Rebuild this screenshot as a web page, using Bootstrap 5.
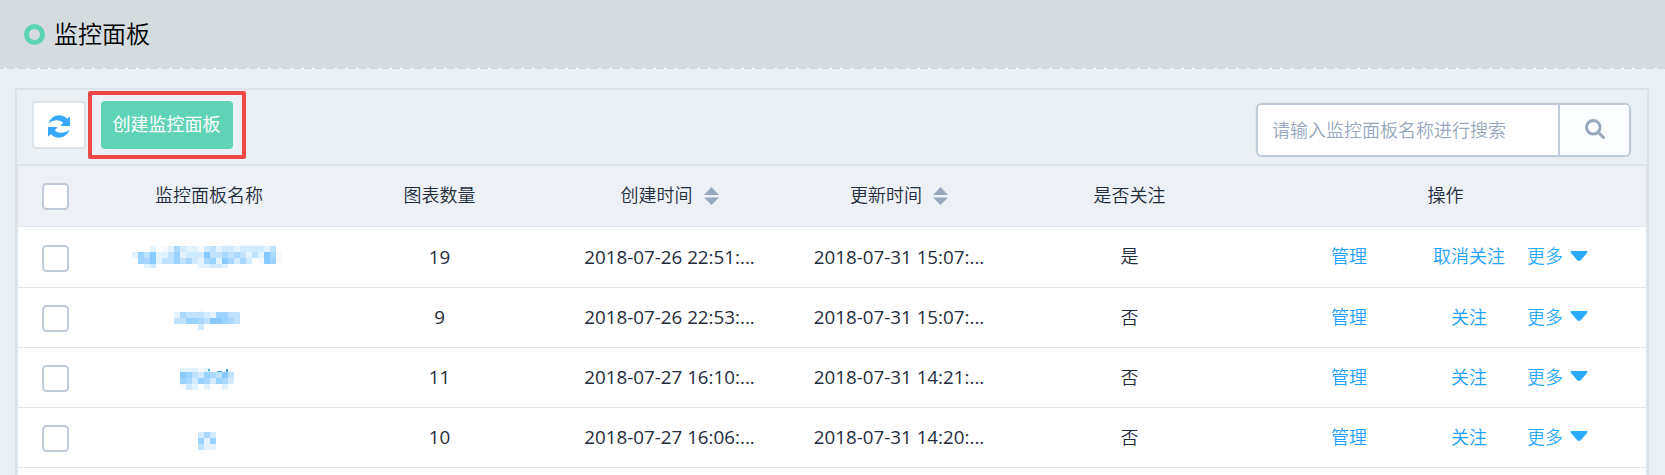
<!DOCTYPE html>
<html lang="zh-CN">
<head>
<meta charset="utf-8">
<meta name="viewport" content="width=device-width, initial-scale=1">
<title>监控面板</title>
<link href="https://cdn.jsdelivr.net/npm/bootstrap@5.3.0/dist/css/bootstrap.min.css" rel="stylesheet">
<style>
html,body{height:475px;overflow:hidden}
body{background:#ebf0f4;color:#1f2d3d;font:18px/24px "Open Sans","Noto Sans CJK SC",sans-serif;display:flex;flex-direction:column}
.page-head{height:69px;flex:none;background:#d5dcdf;padding-left:24px;color:#000;position:relative}
.page-head::after{content:"";position:absolute;left:0;right:0;bottom:0;height:1px;background:repeating-linear-gradient(90deg,#c9d4df 0 4px,#f8fafb 4px 7px,#c9d4df 7px 11px)}
.ring{width:21px;height:21px;border:5px solid #5fd3b5;border-radius:50%;margin-right:9px}
.page-head h1{font-size:24px;font-weight:350;line-height:36px;padding-bottom:1px}
.panel{margin:19px 16px 0 15px;border:2px solid #dde4e9;border-bottom:0;flex:1;min-height:0;overflow:hidden}
.tools{height:76px;border-bottom:2px solid #dde4e9;padding:10px 16px 0 15px;background:#ebf0f4}
.btn-refresh{width:54px;height:48px;background:#fff;border:2px solid #dde4e9;border-radius:4px;margin-top:1px;padding-top:3px!important}
.callout-box{width:158px;height:68px;border:4px solid #ee4848;border-radius:2px;margin:-9px 0 0 2px}
.btn-create{width:132px;height:48px;background:#60d3b6;color:#fff;border-radius:4px;font-size:18px;font-weight:400;padding:0 1px 2px 0}
.btn-create:hover{background:#4fc5a7;color:#fff}
.search-box{width:375px;height:54px;border:2px solid #bfcbd9;border-radius:6px;margin-top:3px;background:#fff;overflow:hidden;box-shadow:0 0 0 1px #e3e8ec}
.search-box input{border:0;font-size:18px;padding:1px 0 0 14px;font-weight:350;color:#1f2d3d;border-radius:0;box-shadow:none}
.search-box input::placeholder{color:#97a8be}
.search-box button{width:71px;border:0;border-left:2px solid #bfcbd9;background:#fbfdff;padding:0 0 3px}
.grid-table{border:0 solid #dde4e9;border-width:0 1px;background:#fff}
.line{display:grid;grid-template-columns:76px 230px 231px 229px 230px 231px 401px;height:60px;border-bottom:1px solid #dfe6ec;align-items:center;text-align:center;font-weight:350}
.line.head-line{height:61px;background:#edf0f5}
.line.first{height:61px}
.line>span{padding-bottom:2px}
.line>.masked{padding:0 0 0 26px;text-align:left}
.line>.num{font-size:18.8px;font-weight:400;padding-bottom:1px}
.tick{width:27px;height:27px;margin:2px 0 0 24px;border:2px solid #bfcbd9;border-radius:6px;background-color:#fff}
.head-line .tick{margin-top:0}
.actions{display:grid;grid-template-columns:136px 104px 90px;padding-left:36px;align-items:center}
.actions a{color:#20a0ff;text-decoration:none}
.actions .more{white-space:nowrap;text-align:left;padding-left:6px;color:#2dabff}
.more svg{margin:-5px 0 0 2px}
.sorter{margin:-3px 0 0 11px}
</style>
</head>
<body>
<header class="page-head d-flex align-items-center"><span class="ring"></span><h1 class="m-0">监控面板</h1></header>
<main class="panel">
 <div class="tools d-flex align-items-start">
  <button class="btn btn-refresh p-0 d-flex align-items-center justify-content-center" aria-label="刷新"><svg width="22" height="23" viewBox="0 0 22 23" fill="#36a9ff"><path id="swirl" d="M.5 8.500C2 3.500 6.500.3 11 .3c3.300 0 6 1.200 8 3.400L22 1.500V11H12.300l2.900-3.200C11 4 5.500 4.500.5 8.500"/><use href="#swirl" transform="rotate(180 11 11.500)"/></svg></button>
  <div class="callout-box d-flex align-items-center justify-content-center"><button class="btn btn-create border-0">创建监控面板</button></div>
  <div class="search-box d-flex ms-auto"><input class="form-control" placeholder="请输入监控面板名称进行搜索"><button class="d-flex align-items-center justify-content-center flex-shrink-0" aria-label="搜索"><svg width="20" height="20" viewBox="0 0 20 20" fill="none" stroke="#97a8be" stroke-width="3"><circle cx="8.3" cy="8.3" r="6.8"/><path d="m13 13 5.500 5.500" stroke-linecap="round"/></svg></button></div>
 </div>
 <div class="grid-table" id="rows"></div>
</main>
<script src="https://cdn.jsdelivr.net/npm/bootstrap@5.3.0/dist/js/bootstrap.bundle.min.js"></script>
<script>
const sorter='<svg class="sorter" width="15" height="18" viewBox="0 0 15 18" fill="#97a8be"><path d="M0 8 7.500 0 15 8zM0 10.500h15L7.500 18z"/></svg>';
const tick='<input type="checkbox" class="form-check-input tick">';
// Masked names: left, top, row heights, and one shade digit per 6px block
const masks=[
 {x:12,y:9,hs:[6,6,6,4],m:['0001071421172312212222130','1536113512226334343131647','0546133534214516424207657','0012000000011221000000000']},
 {x:54,y:12,hs:[2,6,6,6],m:['00007000000','14333215533','33554366543','00002000000']},
 {x:60,y:10,hs:[4,6,6,6],m:['111710000','653254363','542542542','721010010'],marks:[[28,1,2,2],[37,3,5,1],[46,1,2,3]]},
 {x:78,y:14,hs:[6,6,6],m:['242','515','311']}
];
const cols=['#fff','#e2f2ff','#d0eaff','#bfe2ff','#a8d8ff','#9ad3ff','#88caff','#f6faff'];
function mosaic(k){let y=0,s='';k.m.forEach((r,j)=>{[...r].forEach((c,i)=>{if(+c)s+=`<rect x="${i*6}" y="${y}" width="6" height="${k.hs[j]}" fill="${cols[c]}"/>`});y+=k.hs[j]});
 (k.marks||[]).forEach(a=>s+=`<rect x="${a[0]}" y="${a[1]}" width="${a[2]}" height="${a[3]}" fill="#36a9ff"/>`);
 return `<svg class="d-block" width="170" height="40" shape-rendering="crispEdges"><g transform="translate(${k.x} ${k.y})">${s}</g></svg>`}
const data=[[19,'07-26 22:51','15:07','是','取消关注'],[9,'07-26 22:53','15:07','否','关注'],[11,'07-27 16:10','14:21','否','关注'],[10,'07-27 16:06','14:20','否','关注']];
let h=`<div class="line head-line">${tick}<span>监控面板名称</span><span>图表数量</span><span>创建时间${sorter}</span><span>更新时间${sorter}</span><span>是否关注</span><span>操作</span></div>`;
data.forEach((d,i)=>h+=`<div class="line${i?'':' first'}">${tick}<span class="masked">${mosaic(masks[i])}</span><span class="num">${d[0]}</span><span class="num">2018-${d[1]}:...</span><span class="num">2018-07-31 ${d[2]}:...</span><span>${d[3]}</span><span class="actions"><a href="#">管理</a><a href="#">${d[4]}</a><a href="#" class="more">更多 <svg width="18" height="10" viewBox="0 0 18 10" fill="#2dabff"><path d="M1 0h16q1 1 0 2l-6 7q-2 2-4 0L1 2Q0 1 1 0"/></svg></a></span></div>`);
document.getElementById('rows').innerHTML=h+'<div style="height:7px"></div>';
</script>
</body>
</html>
